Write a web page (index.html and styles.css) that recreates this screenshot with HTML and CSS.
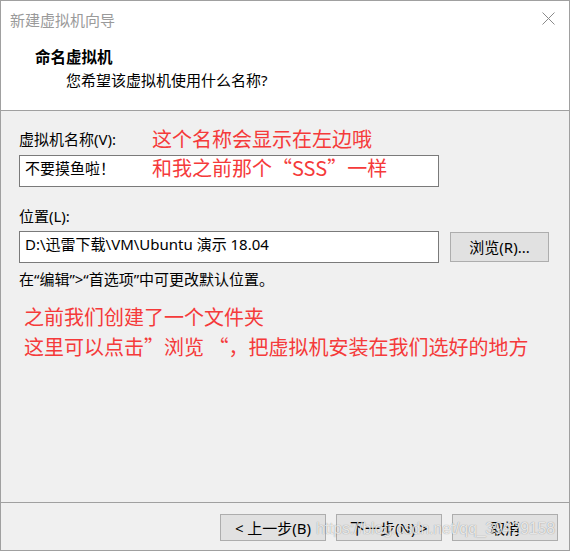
FILE: index.html
```html
<!DOCTYPE html>
<html lang="zh-CN">
<head>
<meta charset="utf-8">
<title>新建虚拟机向导</title>
<link rel="stylesheet" href="styles.css">
</head>
<body>
<div class="window">
  <div class="titlebar">
    <span class="title-text">新建虚拟机向导</span>
    <svg class="close" width="13" height="13" viewBox="0 0 13 13"><path d="M0.5 0.5 L12.5 12.5 M12.5 0.5 L0.5 12.5" stroke="#8a8a8a" stroke-width="1" fill="none"/></svg>
  </div>
  <div class="header">
    <div class="heading">命名虚拟机</div>
    <div class="subheading">您希望该虚拟机使用什么名称?</div>
  </div>
  <div class="content">
    <div class="label-row">
      <span class="label label-fixed">虚拟机名称(V):</span>
      <span class="note">这个名称会显示在左边哦</span>
    </div>
    <div class="field field-name">
      <span class="field-text">不要摸鱼啦！</span>
      <span class="note note-over">和我之前那个“SSS”一样</span>
    </div>
    <div class="label label-loc">位置(L):</div>
    <div class="loc-row">
      <div class="field field-loc"><span class="field-text">D:\迅雷下载\VM\Ubuntu 演示 18.04</span></div>
      <button class="btn btn-browse">浏览(R)...</button>
    </div>
    <div class="label hint">在“编辑”&gt;“首选项”中可更改默认位置。</div>
    <div class="note-block">
      <div>之前我们创建了一个文件夹</div>
      <div>这里可以点击”浏览 “，把虚拟机安装在我们选好的地方</div>
    </div>
  </div>
  <div class="footer">
    <button class="btn btn-nav">&lt; 上一步(B)</button>
    <button class="btn btn-nav">下一步(N) &gt;</button>
    <button class="btn btn-nav">取消</button>
    <span class="watermark">https://blog.csdn.net/qq_39429158</span>
  </div>
</div>
</body>
</html>
```

FILE: styles.css
```css
* { box-sizing: border-box; }
html, body { margin: 0; padding: 0; }
body {
  font-family: "Noto Sans", "Noto Sans CJK SC", sans-serif;
  font-size: 15px;
  color: #000;
  background: #fff;
}
.window {
  width: 570px;
  height: 551px;
  border: 1px solid #a0a0a0;
  background: #f0f0f0;
  display: flex;
  flex-direction: column;
}
.titlebar {
  height: 38px;
  background: #fff;
  display: flex;
  align-items: center;
  justify-content: space-between;
  padding: 0 14px 0 9px;
}
.title-text {
  color: #9a9a9a;
  font-size: 15px;
  line-height: 36px;
}
.close { display: block; margin-top: -3px; }
.header {
  height: 72px;
  background: #fff;
  border-bottom: 1px solid #a0a0a0;
  padding-top: 7px;
}
.heading {
  font-family: "Noto Sans CJK SC", sans-serif;
  font-weight: bold;
  font-size: 15.5px;
  line-height: 20px;
  padding-left: 34px;
}
.subheading {
  font-size: 15px;
  line-height: 20px;
  margin-top: 4px;
  padding-left: 65px;
}
.content {
  padding: 0 0 0 18px;
  display: flex;
  flex-direction: column;
}
.label { line-height: 20px; }
.label-row {
  display: flex;
  align-items: center;
  height: 26px;
  margin-top: 15px;
}
.label-fixed { width: 133px; flex: none; }
.note {
  font-family: "Noto Sans CJK SC", sans-serif;
  color: #f53a3a;
  font-size: 20px;
  line-height: 26px;
}
.field {
  width: 420px;
  height: 32px;
  border: 1px solid #7a7a7a;
  background: #fff;
  padding: 2px 0 0 5px;
  position: relative;
}
.field-text { line-height: 20px; display: block; }
.field-name { margin-top: 3px; }
.note-over {
  position: absolute;
  left: 132px;
  top: -1px;
  line-height: 26px;
}
.label-loc { margin-top: 19px; }
.loc-row {
  display: flex;
  align-items: flex-start;
  gap: 11px;
  margin-top: 5px;
}
.field-loc { padding-top: 2px; }
.btn {
  font-family: "Noto Sans", "Noto Sans CJK SC", sans-serif;
  font-size: 15px;
  color: #000;
  background: #e1e1e1;
  border: 1px solid #adadad;
  padding: 0;
  margin: 0;
  line-height: 20px;
}
.btn-browse {
  width: 99px;
  height: 30px;
  margin-top: 1px;
}
.hint { margin-top: 6px; }
.note-block {
  font-family: "Noto Sans CJK SC", sans-serif;
  margin-top: 13px;
  padding-left: 5px;
  color: #f53a3a;
  font-size: 20px;
  line-height: 30px;
}
.footer {
  margin-top: auto;
  height: 48px;
  border-top: 1px solid #a0a0a0;
  display: flex;
  justify-content: flex-end;
  align-items: flex-start;
  gap: 10px;
  padding: 11px 11px 0 0;
  position: relative;
}
.btn-nav {
  width: 106px;
  height: 27px;
}
.watermark {
  position: absolute;
  left: 315px;
  top: 16px;
  font-family: "Liberation Sans", Arial, sans-serif;
  font-size: 16px;
  line-height: 20px;
  letter-spacing: -0.2px;
  color: rgba(255, 255, 255, 0.8);
  text-shadow: 0 0 1px rgba(0, 0, 0, 0.45);
  pointer-events: none;
}
```
